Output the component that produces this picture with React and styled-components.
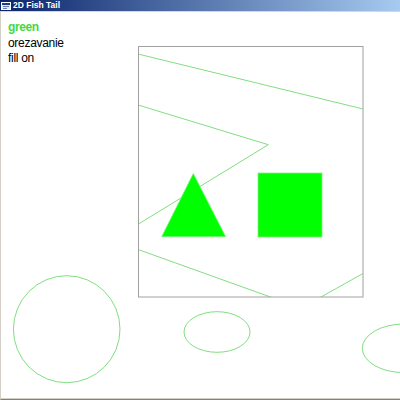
import React from 'react';
import styled, { createGlobalStyle } from 'styled-components';

const GlobalStyle = createGlobalStyle`
	html, body {
		margin: 0;
		padding: 0;
		background: #ffffff;
	}
`;

const Window = styled.div`
	width: 400px;
	height: 400px;
	display: flex;
	flex-direction: column;
	font-family: "Liberation Sans", Arial, sans-serif;
	overflow: hidden;
`;

const TitleBar = styled.div`
	height: 11px;
	flex: none;
	display: flex;
	align-items: center;
	gap: 2px;
	padding-left: 1px;
	background: linear-gradient(to right, #0a246a 0%, #a6caf0 100%);
	border-bottom: 1px solid #c8d8ee;
`;

const TitleText = styled.span`
	color: #ffffff;
	font-size: 8.5px;
	font-weight: bold;
	line-height: 11px;
`;

const Client = styled.div`
	position: relative;
	flex: 1;
	border-left: 1px solid #d4d0c8;
	border-bottom: 1px solid #808080;
	box-shadow: inset 0 -1px 0 #d4d0c8;
	padding: 8px 0 0 7px;
`;

const Canvas = styled.svg`
	position: absolute;
	left: -1px;
	top: 0;
`;

const Status = styled.div`
	position: relative;
	display: flex;
	flex-direction: column;
`;

const StatusLine = styled.span`
	font-size: 12px;
	line-height: 15.5px;
	letter-spacing: ${(p) => (p.$accent ? '-0.4px' : '-0.3px')};
	color: ${(p) => (p.$accent ? '#44d844' : '#000000')};
	font-weight: ${(p) => (p.$accent ? 'bold' : 'normal')};
`;

const AppIcon = () => (
	<svg width="10" height="8" viewBox="0 0 10 8">
		<rect x="0.5" y="0.5" width="9" height="7" fill="#dfe6f2" stroke="#ffffff" />
		<rect x="1" y="1" width="8" height="2" fill="#1c3c8c" />
		<rect x="2" y="4" width="6" height="1" fill="#6a7fb0" />
		<rect x="2" y="6" width="4" height="1" fill="#6a7fb0" />
	</svg>
);

const LINE = '#80de80';

const Scene = () => (
	<Canvas width="400" height="387" viewBox="0 12 400 387">
		<defs>
			<clipPath id="clip">
				<rect x="138.5" y="46.5" width="224.5" height="250.5" />
			</clipPath>
		</defs>
		<g clipPath="url(#clip)" fill="none" stroke={LINE} strokeWidth="1">
			<line x1="120" y1="49.6" x2="380" y2="113.1" />
			<polyline points="120,99.5 268.3,144.7 120,235.3" />
			<line x1="120" y1="243" x2="290" y2="304" />
			<line x1="300" y1="308.7" x2="380" y2="264" />
		</g>
		<polygon
			points="193.3,173.5 161.7,236.7 225.7,236.7"
			fill="#00ff00"
			stroke="#7ef07e"
			strokeWidth="0.8"
		/>
		<rect x="258" y="173" width="64" height="64" fill="#00ff00" stroke="#7ef07e" strokeWidth="0.8" />
		<rect x="138.5" y="46.5" width="224.5" height="250.5" fill="none" stroke="#a0a0a0" strokeWidth="1" />
		<g fill="none" stroke={LINE} strokeWidth="1">
			<ellipse cx="66.7" cy="329.2" rx="53.3" ry="53.5" />
			<ellipse cx="217" cy="332" rx="33" ry="20.3" />
			<ellipse cx="404" cy="348.3" rx="41.7" ry="24.3" />
		</g>
	</Canvas>
);

const App = () => {
	return (
		<>
			<GlobalStyle />
			<Window>
				<TitleBar>
					<AppIcon />
					<TitleText>2D Fish Tail</TitleText>
				</TitleBar>
				<Client>
					<Scene />
					<Status>
						<StatusLine $accent>green</StatusLine>
						<StatusLine>orezavanie</StatusLine>
						<StatusLine>fill on</StatusLine>
					</Status>
				</Client>
			</Window>
		</>
	);
}

export default App;
